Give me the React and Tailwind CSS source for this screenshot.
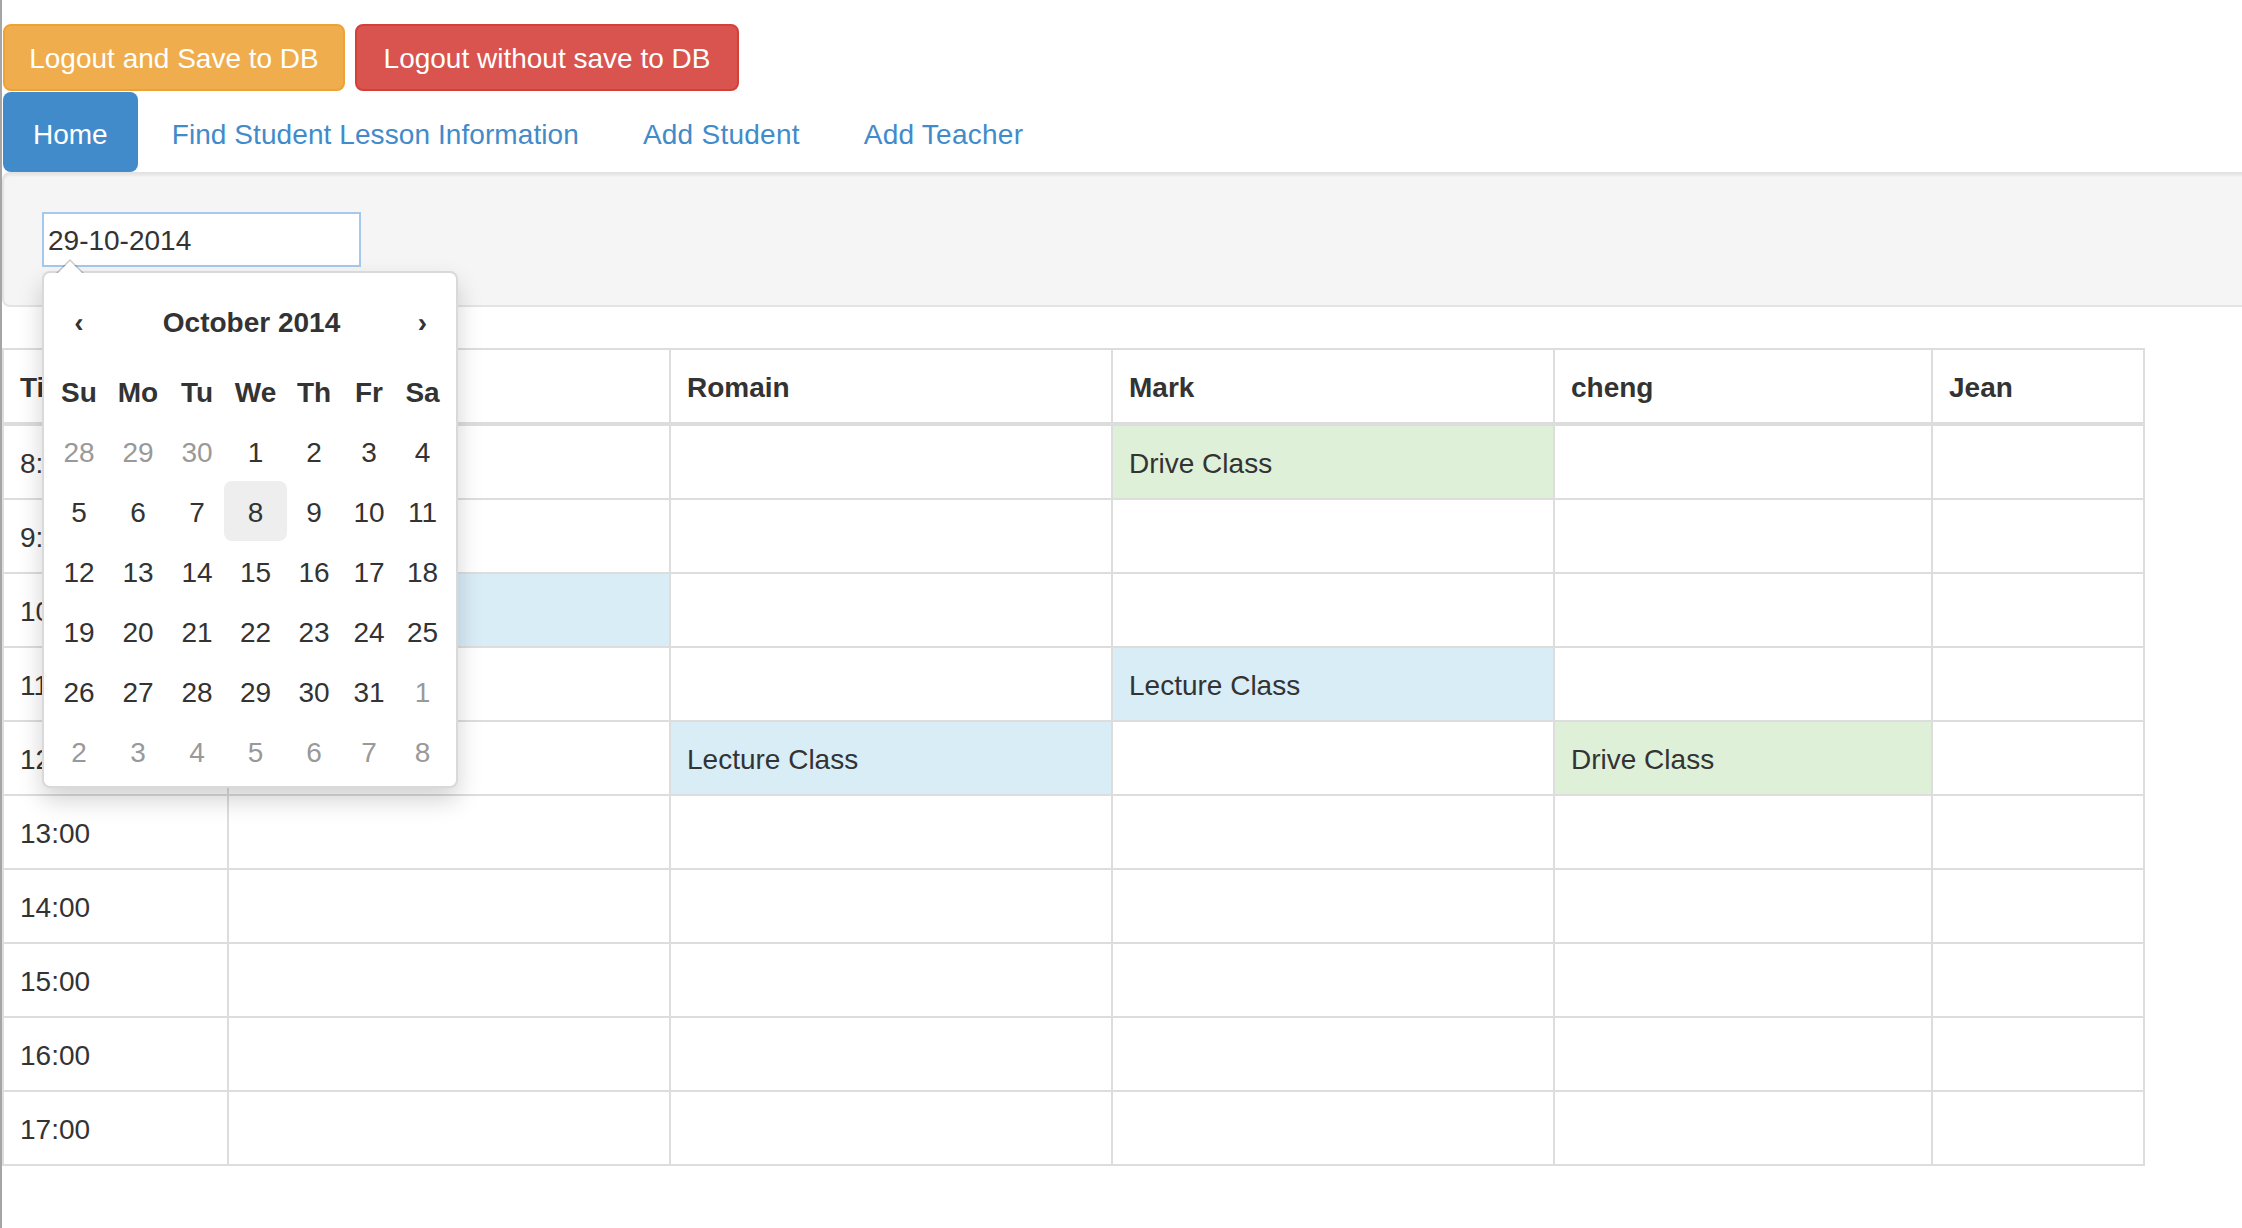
const teachers = ['Jack', 'Romain', 'Mark', 'cheng', 'Jean']
const colWidths = ['w-[225px]', 'w-[442px]', 'w-[442px]', 'w-[442px]', 'w-[378px]', 'w-[212px]']

const lessons = {
  '8:00': { Mark: 'drive' },
  '10:00': { Jack: 'lecture' },
  '11:00': { Mark: 'lecture' },
  '12:00': { Romain: 'lecture', cheng: 'drive' },
}

const hours = ['8:00', '9:00', '10:00', '11:00', '12:00', '13:00', '14:00', '15:00', '16:00', '17:00']

const weeks = [
  [[28, 1], [29, 1], [30, 1], [1], [2], [3], [4]],
  [[5], [6], [7], [8, 0, 1], [9], [10], [11]],
  [[12], [13], [14], [15], [16], [17], [18]],
  [[19], [20], [21], [22], [23], [24], [25]],
  [[26], [27], [28], [29], [30], [31], [1, 1]],
  [[2, 1], [3, 1], [4, 1], [5, 1], [6, 1], [7, 1], [8, 1]],
]

const cellCls = 'border-2 border-[#ddd] px-[16px] pt-[18px] pb-[14px] leading-[40px] text-left align-middle'

function DatePicker() {
  return (
    <div className="absolute left-0 top-[59px] z-10 w-[416px] bg-white border-2 border-black/15 rounded-[8px] shadow-[0_12px_24px_rgba(0,0,0,0.175)] px-[8px] pt-[8px] pb-[5px]">
      <div className="absolute -top-[14px] left-[12px] w-0 h-0 border-x-[14px] border-x-transparent border-b-[14px] border-b-black/20" />
      <div className="absolute -top-[12px] left-[14px] w-0 h-0 border-x-[12px] border-x-transparent border-b-[12px] border-b-white" />
      <div className="grid grid-cols-[54px_64px_54px_63px_54px_56px_51px] text-center text-[#333]">
        <div className="h-[80px] flex items-center justify-center pt-[3px] font-bold">‹</div>
        <div className="col-span-5 h-[80px] flex items-center justify-center pt-[3px] font-bold">October 2014</div>
        <div className="h-[80px] flex items-center justify-center pt-[3px] font-bold">›</div>
        {['Su', 'Mo', 'Tu', 'We', 'Th', 'Fr', 'Sa'].map(d => (
          <div key={d} className="h-[60px] flex items-center justify-center pt-[3px] font-bold">{d}</div>
        ))}
        {weeks.flat().map(([n, muted, active], i) => (
          <div
            key={i}
            className={`h-[60px] flex items-center justify-center pt-[3px] rounded-[8px] ${muted ? 'text-[#999]' : ''} ${active ? 'bg-[#eee]' : ''}`}
          >
            {n}
          </div>
        ))}
      </div>
    </div>
  )
}

export default function App() {
  return (
    <div className="min-h-screen overflow-hidden bg-white border-l-2 border-[#a5a5a5] font-['Liberation_Sans',Arial,sans-serif] text-[28px] leading-[40px] text-[#333]">
      <div className="flex gap-[10px] pt-[24px] pl-[1px]">
        <button className="w-[342px] h-[67px] pt-[3px] rounded-[8px] border-2 border-[#eea236] bg-[#f0ad4e] text-white">
          Logout and Save to DB
        </button>
        <button className="w-[384px] h-[67px] pt-[3px] rounded-[8px] border-2 border-[#d43f3a] bg-[#d9534f] text-white">
          Logout without save to DB
        </button>
      </div>

      <nav className="flex gap-[4px] mt-[1px] pl-[1px]">
        <a className="h-[80px] px-[30px] pt-[5px] flex items-center rounded-[8px] bg-[#428bca] text-white">Home</a>
        <a className="h-[80px] px-[30px] pt-[5px] flex items-center tracking-[0.08px] text-[#428bca]">Find Student Lesson Information</a>
        <a className="h-[80px] px-[30px] pt-[5px] flex items-center tracking-[0.25px] text-[#428bca]">Add Student</a>
        <a className="h-[80px] px-[30px] pt-[5px] flex items-center tracking-[0.25px] text-[#428bca]">Add Teacher</a>
      </nav>

      <div className="mb-[41px] mr-[-20px] bg-[#f5f5f5] border-2 border-[#e3e3e3] rounded-l-[8px] shadow-[inset_0_2px_2px_rgba(0,0,0,0.05)] p-[38px]">
        <div className="relative w-[319px]">
          <input
            readOnly
            value="29-10-2014"
            className="w-[319px] h-[55px] bg-white border-2 border-[#a6c8ea] pl-[4px] pt-[3px] text-[28px] text-[#333] outline-none"
          />
          <DatePicker />
        </div>
      </div>

      <table className="table-fixed border-collapse w-[2141px] border-2 border-[#ddd]">
        <colgroup>
          {colWidths.map((w, i) => <col key={i} className={w} />)}
        </colgroup>
        <thead>
          <tr>
            <th className={`${cellCls} border-b-4 font-bold`}>Time</th>
            {teachers.map(t => (
              <th key={t} className={`${cellCls} border-b-4 font-bold`}>{t}</th>
            ))}
          </tr>
        </thead>
        <tbody>
          {hours.map(h => (
            <tr key={h}>
              <td className={cellCls}>{h}</td>
              {teachers.map(t => {
                const kind = lessons[h]?.[t]
                const bg = kind === 'drive' ? 'bg-[#dff0d8]' : kind === 'lecture' ? 'bg-[#d9edf7]' : ''
                return (
                  <td key={t} className={`${cellCls} ${bg}`}>
                    {kind === 'drive' ? 'Drive Class' : kind === 'lecture' ? 'Lecture Class' : ''}
                  </td>
                )
              })}
            </tr>
          ))}
        </tbody>
      </table>
    </div>
  )
}
